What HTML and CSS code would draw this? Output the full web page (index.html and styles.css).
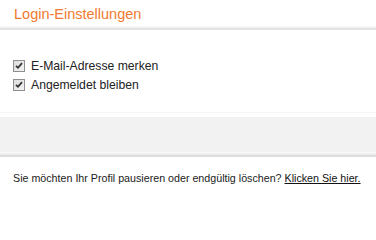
FILE: index.html
```html
<!DOCTYPE html>
<html lang="de">
<head>
<meta charset="utf-8">
<link rel="stylesheet" href="styles.css">
</head>
<body>
<div class="page">
  <div class="header"><h2 class="title">Login-Einstellungen</h2></div>
  <div class="divider"></div>
  <div class="options">
    <label class="option"><input class="native" type="checkbox" checked><svg class="box" width="12" height="12" viewBox="0 0 12 12"><defs><linearGradient id="g" x1="0" y1="0" x2="1" y2="1"><stop offset="0" stop-color="#dcdcdc"/><stop offset="1" stop-color="#f4f4f4"/></linearGradient></defs><rect x="0.5" y="0.5" width="11" height="11" fill="url(#g)" stroke="#8e8f8f"/><path d="M3 5.8 L5 7.8 L9 3.2" fill="none" stroke="#333" stroke-width="1.8"/></svg><span>E-Mail-Adresse merken</span></label>
    <label class="option"><input class="native" type="checkbox" checked><svg class="box" width="12" height="12" viewBox="0 0 12 12"><rect x="0.5" y="0.5" width="11" height="11" fill="url(#g)" stroke="#8e8f8f"/><path d="M3 5.8 L5 7.8 L9 3.2" fill="none" stroke="#333" stroke-width="1.8"/></svg><span>Angemeldet bleiben</span></label>
  </div>
  <div class="band"></div>
  <p class="footer">Sie möchten Ihr Profil pausieren oder endgültig löschen? <a href="#" class="link">Klicken Sie hier.</a></p>
</div>
</body>
</html>
```
FILE: styles.css
```css
html, body {
  margin: 0;
  padding: 0;
  background: #fff;
}
.page {
  width: 376px;
  height: 202px;
  font-family: "Liberation Sans", Arial, sans-serif;
  color: #222;
  overflow: hidden;
}
.header {
  height: 26px;
  padding: 6px 0 0 14px;
  box-sizing: border-box;
}
.title {
  margin: 0;
  font-size: 14.5px;
  font-weight: normal;
  color: #f07a2e;
  line-height: 17px;
}
.divider {
  height: 4px;
  background: linear-gradient(#f9f9f9 0, #f1f1f1 50%, #e3e3e3 50%, #e3e3e3 100%);
}
.options {
  padding: 30px 0 0 13px;
  display: flex;
  flex-direction: column;
  gap: 7px;
  height: 83px;
  box-sizing: border-box;
  border-bottom: 1px solid #f6f6f6;
}
.option {
  display: flex;
  align-items: center;
  gap: 6px;
  font-size: 12.2px;
  height: 12px;
  line-height: 12px;
}
.native {
  display: none;
}
.box {
  flex: none;
  display: block;
}
.band {
  height: 40px;
  margin-top: 4px;
  background: linear-gradient(#f2f2f2 0, #f2f2f2 35px, #f9f9f9 35px, #f9f9f9 36px, #eeeeee 36px, #eeeeee 38px, #dddddd 38px, #dddddd 40px);
}
.footer {
  margin: 0;
  padding: 15px 0 0 13px;
  font-size: 10.7px;
  line-height: 13px;
  color: #222;
}
.link {
  color: #111;
  text-decoration: underline;
}
```
